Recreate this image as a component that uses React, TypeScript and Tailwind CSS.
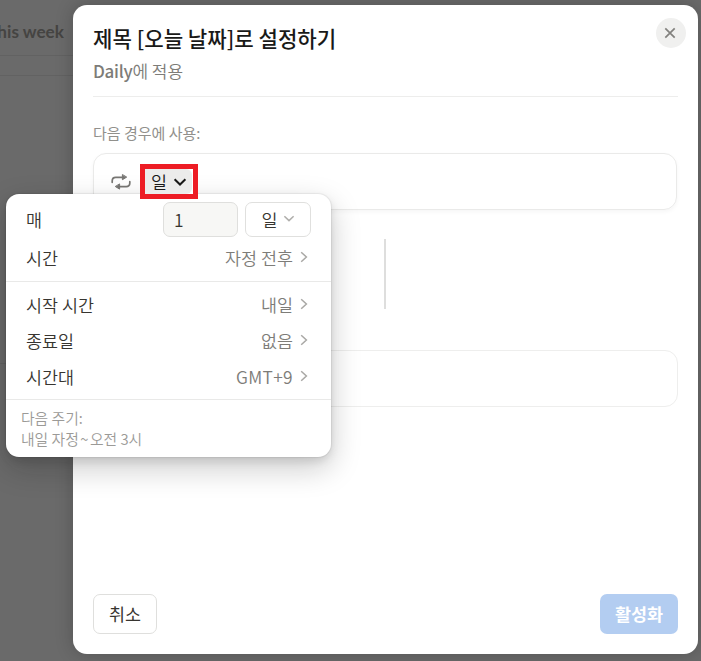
import { useState } from "react";
import type { ReactNode } from "react";

const ChevronDown = ({ className }: { className?: string }) => (
    <svg viewBox="0 0 14 10" className={className} fill="none" stroke="currentColor">
        <path d="M1.6 2.3 L7 7.5 L12.4 2.3" />
    </svg>
);

const ChevronRight = () => (
    <svg viewBox="0 0 8 12" className="h-3 w-2 text-[#a9a8a5]" fill="none" stroke="currentColor" strokeWidth="1.5">
        <path d="M1.2 1.2 L6.4 6 L1.2 10.8" />
    </svg>
);

const RepeatIcon = () => (
    <svg viewBox="0 0 20 18" className="h-[18px] w-5 text-[#787774]" fill="none" stroke="currentColor" strokeWidth="1.7" strokeLinecap="round">
        <path d="M1.2 9.3 V7.9 Q1.2 4.3 4.8 4.3 H12" />
        <path d="M18.8 8.7 V10.1 Q18.8 13.7 15.2 13.7 H8" />
        <path d="M11.4 1.9 V6.7 L15.4 4.3 Z" fill="currentColor" strokeWidth="1" strokeLinejoin="round" />
        <path d="M8.6 11.3 V16.1 L4.6 13.7 Z" fill="currentColor" strokeWidth="1" strokeLinejoin="round" />
    </svg>
);

function MenuRow({ label, value }: { label: string; value: ReactNode }) {
    return (
        <button className="flex h-9 w-full items-center justify-between pr-[23px] pl-5 text-left">
            <span>{label}</span>
            <span className="flex items-center gap-[7px] text-[#7d7c78]">
                {value}
                <span className="-mt-[3px]"><ChevronRight /></span>
            </span>
        </button>
    );
}

function RepeatMenu() {
    const [count, setCount] = useState("1");

    return (
        <div className="absolute top-[194px] left-[6px] z-10 h-[263px] w-[325px] rounded-[13px] bg-white text-[17.4px] leading-6 font-[350] text-[#373530] shadow-[0_0_1px_1px_rgba(15,15,15,0.06),0_4px_8px_rgba(15,15,15,0.10),0_11px_30px_rgba(15,15,15,0.22)]">
            <div className="h-[88px] border-b border-[#e9e9e8] pt-2">
                <div className="flex h-[35px] items-center pr-5 pl-5">
                    <span className="flex-1">매</span>
                    <input
                        value={count}
                        onChange={(e) => setCount(e.target.value)}
                        className="h-[35px] w-[75px] rounded-[7px] border border-[#dfdfdd] bg-[#f7f7f5] px-2.5"
                    />
                    <button className="ml-[7px] flex h-[35px] w-[66px] items-center justify-center gap-[5px] rounded-[7px] border border-[#e0e0de] pt-px">
                        일
                        <ChevronDown className="-mt-1 h-[9px] w-3 stroke-[1.8] text-[#b0afac]" />
                    </button>
                </div>
                <div className="pt-[3px]">
                    <MenuRow label="시간" value="자정 전후" />
                </div>
            </div>
            <div className="h-[118px] border-b border-[#e9e9e8] pt-[5px]">
                <MenuRow label="시작 시간" value="내일" />
                <MenuRow label="종료일" value="없음" />
                <MenuRow label="시간대" value={<span className="tracking-[0.35px]">GMT+9</span>} />
            </div>
            <div className="px-[15px] pt-[7px] text-[14.8px] leading-[21px] text-[#9b9a97]">
                <p>다음 주기:</p>
                <p>내일 자정<span className="px-[1.5px]">~</span>오전 3시</p>
            </div>
        </div>
    );
}

export default function App() {
    return (
        <div className="relative flex h-[661px] w-[701px] overflow-hidden bg-[#6a6a6a] font-['Noto_Sans_CJK_KR',sans-serif]">
            <aside className="w-[73px] shrink-0">
                <div className="flex h-14 items-center justify-end border-b border-[#626262] pt-2 pr-[9px] font-[Lato,sans-serif] text-[17.2px] font-bold whitespace-nowrap text-[#454442]">
                    his week
                </div>
                <div className="h-5 border-b border-[#626262]" />
                <div className="h-[288px] border-b border-[#626262]" />
            </aside>

            <main className="relative mt-[5px] flex h-[649px] w-[625px] flex-col rounded-[14px] bg-white px-5 shadow-[0_0_18px_rgba(0,0,0,0.22)]">
                <header className="relative h-[92px] border-b border-[#ededec] pt-[17px]">
                    <h1 className="text-[21.15px] leading-8 font-medium text-[#191918]">제목 [오늘 날짜]로 설정하기</h1>
                    <p className="mt-px text-[17px] leading-8 font-[350] text-[#7d7c78]">
                        <span className="font-medium tracking-[-0.3px]">Daily</span>에 적용
                    </p>
                    <button className="absolute top-[13px] -right-2 flex size-[30px] items-center justify-center rounded-full bg-[#f0f0ef] text-[#82817e]">
                        <svg viewBox="0 0 12 12" className="mr-[3px] size-3" fill="none" stroke="currentColor" strokeWidth="1.7">
                            <path d="M1.3 1.3 L10.7 10.7 M10.7 1.3 L1.3 10.7" />
                        </svg>
                    </button>
                </header>

                <p className="mt-6 text-[15px] leading-6 text-[#91908c]">다음 경우에 사용:</p>
                <section className="mt-2 flex h-[57px] w-[584px] items-center rounded-[13px] border border-[#eaeae9] pl-[17px] shadow-[0_2px_4px_rgba(15,15,15,0.04)]">
                    <RepeatIcon />
                    {/* z-20 keeps the outlined trigger above the open menu */}
                    <div className="relative z-20 ml-[9px] h-[35px] w-[58px] border-[5px] border-[#ed1c24] bg-white">
                        <button className="flex h-full w-[47px] items-center rounded-r-[6px] bg-[#ececeb] pt-0.5 pl-1.5 text-[17.4px] font-[350] text-[#191918]">
                            일
                            <ChevronDown className="-mt-0.5 ml-1.5 h-[10px] w-3.5 stroke-2" />
                        </button>
                    </div>
                </section>

                <div className="mt-[29px] ml-[291px] h-[70px] w-0.5 bg-[#dededd]" />
                <section className="mt-[41px] h-[57px] w-[585px] rounded-[13px] border border-[#eeeeed]" />

                <footer className="mt-auto mb-5 flex justify-between text-[17.4px]">
                    <button className="h-10 w-16 rounded-[7px] border border-[#dfdfdd] text-[#373530]">취소</button>
                    <button className="h-10 w-[78px] rounded-[7px] bg-[#b3cdf1] font-bold text-white">활성화</button>
                </footer>
            </main>

            <RepeatMenu />
        </div>
    );
}
